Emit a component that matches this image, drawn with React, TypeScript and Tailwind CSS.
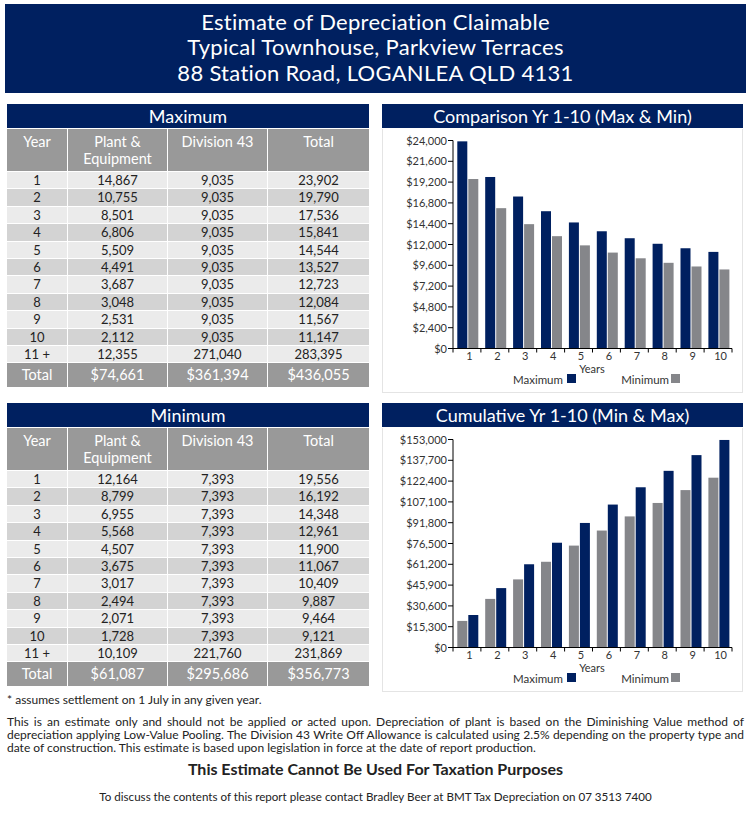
// Estimate of depreciation claimable — one page summary with two tables and two bar charts.

const NAVY = "#002060";
const GREY_BAR = "#85868a";

type Fila = [string, string, string, string];

const MAXIMO: Fila[] = [
  ["1", "14,867", "9,035", "23,902"],
  ["2", "10,755", "9,035", "19,790"],
  ["3", "8,501", "9,035", "17,536"],
  ["4", "6,806", "9,035", "15,841"],
  ["5", "5,509", "9,035", "14,544"],
  ["6", "4,491", "9,035", "13,527"],
  ["7", "3,687", "9,035", "12,723"],
  ["8", "3,048", "9,035", "12,084"],
  ["9", "2,531", "9,035", "11,567"],
  ["10", "2,112", "9,035", "11,147"],
  ["11 +", "12,355", "271,040", "283,395"],
];

const MINIMO: Fila[] = [
  ["1", "12,164", "7,393", "19,556"],
  ["2", "8,799", "7,393", "16,192"],
  ["3", "6,955", "7,393", "14,348"],
  ["4", "5,568", "7,393", "12,961"],
  ["5", "4,507", "7,393", "11,900"],
  ["6", "3,675", "7,393", "11,067"],
  ["7", "3,017", "7,393", "10,409"],
  ["8", "2,494", "7,393", "9,887"],
  ["9", "2,071", "7,393", "9,464"],
  ["10", "1,728", "7,393", "9,121"],
  ["11 +", "10,109", "221,760", "231,869"],
];

const num = (s: string) => Number(s.replace(/,/g, ""));

// totales por año (1-10) y acumulados
const totMax = MAXIMO.slice(0, 10).map((f) => num(f[3]));
const totMin = MINIMO.slice(0, 10).map((f) => num(f[3]));
const acum = (xs: number[]) => xs.reduce<number[]>((a, x) => [...a, (a[a.length - 1] ?? 0) + x], []);

const fmt = (n: number) => "$" + n.toLocaleString("en-US");

export default function App() {
  return (
    <div className="w-[751px] bg-white pb-4 font-[Lato,'Open_Sans',sans-serif] text-[#222]">
      <header className="mx-[5px] mt-[4px] flex h-[89px] flex-col items-center justify-center bg-[#002060] pb-[3px] text-[22px] leading-[25.5px] tracking-[0.3px] text-white">
        <div>Estimate of Depreciation Claimable</div>
        <div>Typical Townhouse, Parkview Terraces</div>
        <div>88 Station Road, LOGANLEA QLD 4131</div>
      </header>

      <div className="mt-[11px] grid grid-cols-[362px_361px] items-start gap-x-[13px] gap-y-[10px] pl-[7px]">
        <Tabla titulo="Maximum" filas={MAXIMO} total={["$74,661", "$361,394", "$436,055"]} />
        <Grafico
          titulo="Comparison Yr 1-10 (Max & Min)"
          tope={24000}
          paso={2400}
          series={[
            { valores: totMax, color: NAVY },
            { valores: totMin, color: GREY_BAR },
          ]}
        />
        <Tabla titulo="Minimum" filas={MINIMO} total={["$61,087", "$295,686", "$356,773"]} />
        <Grafico
          titulo="Cumulative Yr 1-10 (Min & Max)"
          tope={153000}
          paso={15300}
          series={[
            { valores: acum(totMin), color: GREY_BAR },
            { valores: acum(totMax), color: NAVY },
          ]}
        />
      </div>

      <div className="px-[7px]">
        <p className="mt-[1px] text-[12px] leading-[14px]">* assumes settlement on 1 July in any given year.</p>
        <p className="mt-[8px] text-justify text-[12px] leading-[13px]">
          This is an estimate only and should not be applied or acted upon. Depreciation of plant is based on the
          Diminishing Value method of depreciation applying Low-Value Pooling. The Division 43 Write Off Allowance is
          calculated using 2.5% depending on the property type and date of construction. This estimate is based upon
          legislation in force at the date of report production.
        </p>
        <h2 className="mt-[5px] text-center text-[16px] font-bold leading-[20px]">
          This Estimate Cannot Be Used For Taxation Purposes
        </h2>
        <p className="mt-[11px] text-center text-[11.6px] leading-[14px]">
          To discuss the contents of this report please contact Bradley Beer at BMT Tax Depreciation on 07 3513 7400
        </p>
      </div>
    </div>
  );
}

function Tabla({ titulo, filas, total }: { titulo: string; filas: Fila[]; total: [string, string, string] }) {
  const cols = "grid grid-cols-[60px_99px_99px_101px] gap-x-[1px]";
  return (
    <div className="flex flex-col">
      <div className="flex h-[25px] items-center justify-center border-b border-white bg-[#002060] text-[18px] text-white">
        {titulo}
      </div>
      <div className={`${cols} h-[43px] border-b border-white text-[14.5px] leading-[17px] text-white`}>
        {["Year", "Plant & Equipment", "Division 43", "Total"].map((h) => (
          <div key={h} className="bg-[#999999] px-1 pt-[4px] text-center">
            {h === "Plant & Equipment" ? (
              <>
                Plant &amp;
                <br />
                Equipment
              </>
            ) : (
              h
            )}
          </div>
        ))}
      </div>
      {filas.map((f, i) => (
        <div key={f[0]} className={`${cols} h-[17.4px] border-b border-white text-[13px] leading-[16.4px]`}>
          {f.map((c, j) => (
            <div key={j} className={`text-center ${i % 2 === 0 ? "bg-[#ebebeb]" : "bg-[#d3d3d3]"}`}>
              {c}
            </div>
          ))}
        </div>
      ))}
      <div className={`${cols} h-[24px] text-[14.5px] leading-[24px] text-white`}>
        {["Total", ...total].map((c) => (
          <div key={c} className="bg-[#999999] text-center">
            {c}
          </div>
        ))}
      </div>
    </div>
  );
}

function Grafico({
  titulo,
  tope,
  paso,
  series,
}: {
  titulo: string;
  tope: number;
  paso: number;
  series: { valores: number[]; color: string }[];
}) {
  // zona del gráfico dentro del panel de 361 x 264
  const x0 = 70;
  const x1 = 349;
  const yTop = 11.5;
  const y0 = 219.5;
  const ancho = (x1 - x0) / 10;
  const y = (v: number) => y0 - (v / tope) * (y0 - yTop);
  const marcas = Array.from({ length: 11 }, (_, i) => i * paso);

  return (
    <div className="flex flex-col">
      <div className="flex h-[25px] items-center justify-center border-b border-white bg-[#002060] text-[18px] text-white">
        {titulo}
      </div>
      <div className="h-[264px] border border-t-0 border-[#e4e4e4]">
        <svg width="359" height="263" viewBox="0 0 359 263" className="block">
          {marcas.map((m) => (
            <g key={m}>
              <line x1={x0 - 5} x2={x0} y1={y(m)} y2={y(m)} stroke="#000" strokeWidth="1" />
              <text x={x0 - 6} y={y(m) + 4} textAnchor="end" fontSize="11" fill="#333">
                {fmt(m)}
              </text>
            </g>
          ))}
          {series.map((s, k) =>
            s.valores.map((v, i) => (
              <rect
                key={`${k}-${i}`}
                x={x0 + i * ancho + 4.3 + k * 11}
                y={y(v)}
                width="10"
                height={y0 - y(v)}
                fill={s.color}
              />
            )),
          )}
          <line x1={x0} x2={x0} y1={yTop} y2={y0} stroke="#000" strokeWidth="1" />
          <line x1={x0} x2={x1} y1={y0} y2={y0} stroke="#000" strokeWidth="1" />
          {Array.from({ length: 11 }, (_, i) => (
            <line key={i} x1={x0 + i * ancho} x2={x0 + i * ancho} y1={y0} y2={y0 + 4} stroke="#000" strokeWidth="1" />
          ))}
          {Array.from({ length: 10 }, (_, i) => (
            <text key={i} x={x0 + i * ancho + ancho / 2 + 2.5} y={y0 + 11} textAnchor="middle" fontSize="11" fill="#333">
              {i + 1}
            </text>
          ))}
          <text x={209} y={y0 + 24.5} textAnchor="middle" fontSize="11" fill="#333">
            Years
          </text>
          <text x={180} y={y0 + 35.5} textAnchor="end" fontSize="11.5" fill="#333">
            Maximum
          </text>
          <rect x={184} y={y0 + 25.5} width="9" height="9" fill={NAVY} />
          <text x={286} y={y0 + 35.5} textAnchor="end" fontSize="11.5" fill="#333">
            Minimum
          </text>
          <rect x={288} y={y0 + 25.5} width="9" height="9" fill={GREY_BAR} />
        </svg>
      </div>
    </div>
  );
}
